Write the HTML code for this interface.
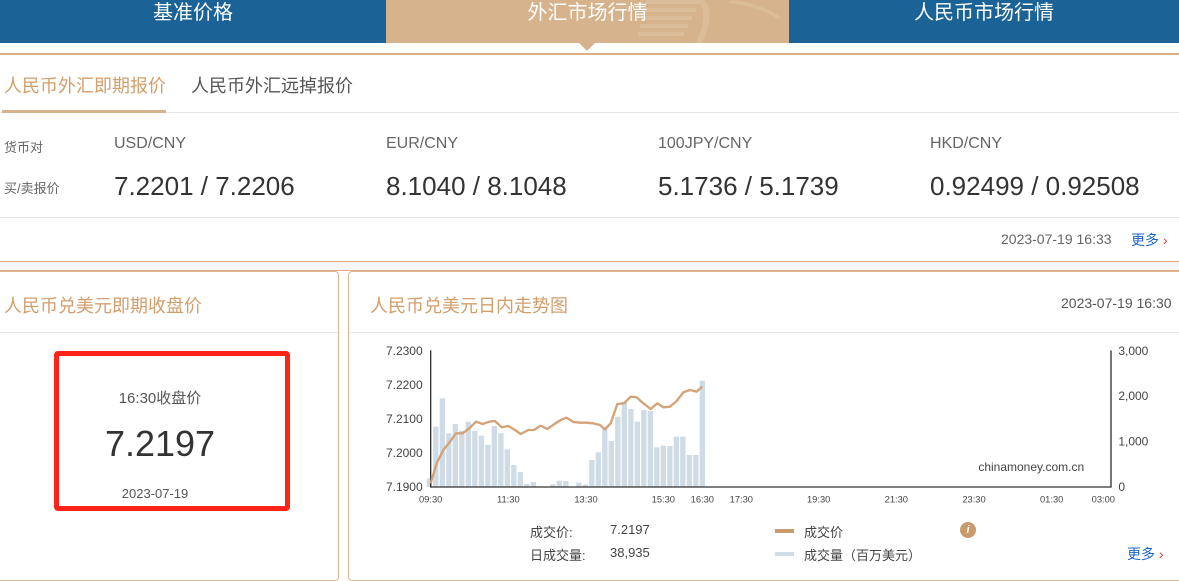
<!DOCTYPE html>
<html><head><meta charset="utf-8"><style>
*{margin:0;padding:0;box-sizing:border-box}
body{width:1179px;height:567px;overflow:hidden;background:#fff;font-family:"Liberation Sans","Noto Sans CJK SC",sans-serif;position:relative}
.a{position:absolute;white-space:nowrap}
.nav{position:absolute;top:0;height:43px;background:#1b6397;color:#fff;font-size:20px;text-align:center;line-height:26px}
</style></head><body>
<div class="nav" style="left:0;width:386px">基准价格</div>
<div class="nav" style="left:386px;width:403px;background:#d6b38c;overflow:hidden">
<svg class="a" style="left:0;top:0" width="403" height="43"><g fill="#dcbd99"><rect x="260" y="0" width="55" height="4"/><rect x="258" y="8" width="52" height="4"/><rect x="256" y="16" width="50" height="4"/><rect x="254" y="24" width="48" height="4"/><rect x="252" y="32" width="46" height="4"/><path d="M318 0 Q330 10 316 43 L310 43 Q324 12 312 0Z"/><path d="M345 0 Q375 3 396 18 L390 18 Q372 6 342 3Z"/></g></svg>
<span style="position:relative">外汇市场行情</span></div>
<div class="nav" style="left:789px;width:390px">人民币市场行情</div>
<div class="a" style="left:579px;top:43px;width:0;height:0;border-left:8px solid transparent;border-right:8px solid transparent;border-top:8px solid #d6b38c"></div>
<div class="a" style="left:0;top:53px;width:1179px;height:2px;background:#d9b08a"></div>
<div class="a" style="left:4px;top:72px;font-size:18px;color:#d39e6b">人民币外汇即期报价</div>
<div class="a" style="left:191px;top:72px;font-size:18px;color:#555">人民币外汇远掉报价</div>
<div class="a" style="left:0;top:112px;width:1179px;height:1px;background:#e5e5e5"></div>
<div class="a" style="left:2px;top:110px;width:164px;height:3px;background:#d6b38c"></div>
<div class="a" style="left:4px;top:137px;font-size:13px;color:#666">货币对</div>
<div class="a" style="left:4px;top:178px;font-size:13px;color:#666">买/卖报价</div>
<div class="a" style="left:114px;top:135px;font-size:16px;color:#666">USD/CNY</div>
<div class="a" style="left:386px;top:135px;font-size:16px;color:#666">EUR/CNY</div>
<div class="a" style="left:658px;top:135px;font-size:16px;color:#666">100JPY/CNY</div>
<div class="a" style="left:930px;top:135px;font-size:16px;color:#666">HKD/CNY</div>
<div class="a" style="left:114px;top:171px;font-size:26px;color:#333">7.2201 / 7.2206</div>
<div class="a" style="left:386px;top:171px;font-size:26px;color:#333">8.1040 / 8.1048</div>
<div class="a" style="left:658px;top:171px;font-size:26px;color:#333">5.1736 / 5.1739</div>
<div class="a" style="left:930px;top:171px;font-size:26px;color:#333">0.92499 / 0.92508</div>
<div class="a" style="left:0;top:217px;width:1179px;height:1px;background:#e8e8e8"></div>
<div class="a" style="left:1001px;top:231px;font-size:14px;color:#666">2023-07-19 16:33</div>
<div class="a" style="left:1131px;top:230px;font-size:14px;color:#1a64c8">更多 <span style="color:#e8303a">›</span></div>
<div class="a" style="left:0;top:261px;width:1179px;height:10px;background:#f6f6f6;border-top:1px solid #e0a882;border-bottom:1px solid #e0a882"></div>
<div class="a" style="left:-3px;top:271px;width:342px;height:310px;border:1px solid #dfb48c;border-radius:4px"></div>
<div class="a" style="left:348px;top:271px;width:840px;height:310px;border:1px solid #dfb48c;border-radius:4px"></div>
<div class="a" style="left:0;top:332px;width:338px;height:1px;background:#e8e8e8"></div>
<div class="a" style="left:349px;top:332px;width:830px;height:1px;background:#e8e8e8"></div>
<div class="a" style="left:4px;top:292px;font-size:18px;color:#d39e6b">人民币兑美元即期收盘价</div>
<div class="a" style="left:370px;top:292px;font-size:18px;color:#d39e6b">人民币兑美元日内走势图</div>
<div class="a" style="left:1061px;top:295px;font-size:14px;color:#555">2023-07-19 16:30</div>
<div class="a" style="left:54px;top:351px;width:236px;height:160px;border:5px solid #ff2318;border-radius:4px"></div>
<div class="a" style="left:60px;top:387px;width:200px;text-align:center;font-size:15px;color:#555">16:30收盘价</div>
<div class="a" style="left:60px;top:423px;width:200px;text-align:center;font-size:36px;color:#333">7.2197</div>
<div class="a" style="left:55px;top:486px;width:200px;text-align:center;font-size:13px;color:#555">2023-07-19</div>
<svg class="a" style="left:340px;top:330px" width="839" height="237" viewBox="0 0 2517 711">
<g fill="#cfdbe5" id="b"></g>
<path d="M272 61V471H2313V61" fill="none" stroke="#333" stroke-width="4"/>
<polyline fill="none" stroke="#d4a276" stroke-width="7" stroke-linejoin="round" points="272,460 290,400 310,360 330,335 348,310 368,310 388,295 408,275 428,282 448,275 465,273 485,292 505,288 525,300 542,312 565,300 582,300 602,287 622,297 642,283 662,270 680,263 700,276 720,278 740,278 760,280 780,285 795,298 812,280 832,222 852,220 872,200 890,202 910,220 932,237 952,220 970,232 990,230 1010,213 1030,187 1050,180 1070,185 1087,170"/>
<g font-size="36" fill="#444" text-anchor="end"><text x="248" y="75">7.2300</text><text x="248" y="177">7.2200</text><text x="248" y="279">7.2100</text><text x="248" y="381">7.2000</text><text x="248" y="483">7.1900</text></g>
<g font-size="36" fill="#444"><text x="2335" y="75">3,000</text><text x="2335" y="210">2,000</text><text x="2335" y="347">1,000</text><text x="2335" y="483">0</text></g>
<g font-size="28" fill="#444" text-anchor="middle"><text x="272" y="518">09:30</text><text x="505" y="518">11:30</text><text x="738" y="518">13:30</text><text x="970" y="518">15:30</text><text x="1087" y="518">16:30</text><text x="1204" y="518">17:30</text><text x="1436" y="518">19:30</text><text x="1669" y="518">21:30</text><text x="1902" y="518">23:30</text><text x="2135" y="518">01:30</text><text x="2290" y="518">03:00</text></g>
<text x="1915" y="423" font-size="36" fill="#444">chinamoney.com.cn</text>
</svg>
<script>
var t=[445,290,205,310,282,302,275,303,317,345,288,310,358,405,426,462,456,0,0,463,452,453,0,458,464,390,367,295,333,260,215,237,275,240,243,352,347,348,320,320,375,375,152],s='';
t.forEach(function(y,i){if(y)s+='<rect x="'+(260+i*19.5)+'" y="'+y+'" width="16" height="'+(471-y)+'"/>';});
document.getElementById('b').innerHTML=s;
</script>
<div class="a" style="left:530px;top:522px;font-size:13px;color:#444">成交价:</div>
<div class="a" style="left:610px;top:522px;font-size:13px;color:#444">7.2197</div>
<div class="a" style="left:530px;top:545px;font-size:13px;color:#444">日成交量:</div>
<div class="a" style="left:610px;top:545px;font-size:13px;color:#444">38,935</div>
<div class="a" style="left:775px;top:529px;width:19px;height:4px;background:#c99a6c"></div>
<div class="a" style="left:804px;top:522px;font-size:13px;color:#444">成交价</div>
<div class="a" style="left:960px;top:522px;width:16px;height:16px;border-radius:50%;background:#c99a6c;color:#fff;font-size:11px;font-style:italic;font-weight:bold;text-align:center;line-height:16px">i</div>
<div class="a" style="left:775px;top:552px;width:19px;height:4px;background:#cfdbe5"></div>
<div class="a" style="left:804px;top:545px;font-size:13px;color:#444">成交量（百万美元）</div>
<div class="a" style="left:1127px;top:544px;font-size:14px;color:#1a64c8">更多 <span style="color:#e8303a">›</span></div>
</body></html>
